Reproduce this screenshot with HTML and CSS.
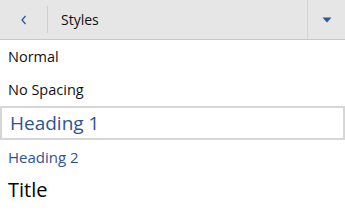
FILE: index.html
```html
<!DOCTYPE html>
<html lang="en">
<head>
    <meta charset="UTF-8">
    <title>Styles</title>
    <link rel="stylesheet" href="styles.css">
</head>
<body>
    <div class="pane">
        <div class="toolbar">
            <button class="back" aria-label="Back">
                <svg width="8" height="10" viewBox="0 0 8 10"><path d="M5.5 1 L2 5 L5.5 9" fill="none" stroke="#2b579a" stroke-width="1.3"/></svg>
            </button>
            <div class="title">Styles</div>
            <button class="menu" aria-label="More">
                <svg width="10" height="6" viewBox="0 0 10 6"><path d="M0.5 0.5 H9.5 L5 5.5 Z" fill="#2b579a"/></svg>
            </button>
        </div>

        <ul class="style-list">
            <li class="style normal">Normal</li>
            <li class="style normal">No Spacing</li>
            <li class="style h1 selected">Heading 1</li>
            <li class="style h2">Heading 2</li>
            <li class="style doc-title">Title</li>
        </ul>
    </div>
</body>
</html>
```

FILE: styles.css
```css
* {
    margin: 0;
    padding: 0;
    box-sizing: border-box;
}

body {
    font-family: 'Open Sans', 'Noto Sans', sans-serif;
    background: #fff;
    color: #000;
}

.pane {
    width: 345px;
    height: 219px;
    overflow: hidden;
}

.toolbar {
    display: flex;
    align-items: stretch;
    height: 40px;
    background: #e6e6e6;
    border-bottom: 1px solid #c8c8c8;
}

.toolbar button {
    background: none;
    border: none;
    display: flex;
    align-items: center;
    justify-content: center;
}

.back {
    width: 48px;
    margin: 6px 0;
    border-right: 1px solid #cfcfcf !important;
}

.toolbar .title {
    flex: 1;
    display: flex;
    align-items: center;
    padding-left: 13px;
    font-size: 14px;
    color: #111;
}

.menu {
    width: 38px;
    border-left: 1px solid #d4d4d4 !important;
}

.style-list {
    list-style: none;
}

.style {
    display: flex;
    align-items: center;
    padding: 0 8px;
}

.normal {
    height: 33px;
    font-size: 14.5px;
    color: #111;
}

.h1 {
    height: 34px;
    font-size: 19px;
    color: #2f5496;
    padding-left: 8px;
}

.selected {
    border: 2px solid #d6d6d6;
}

.h2 {
    height: 33px;
    font-size: 15px;
    color: #2f5496;
}

.doc-title {
    height: 33px;
    font-size: 20px;
    color: #000;
}
```
